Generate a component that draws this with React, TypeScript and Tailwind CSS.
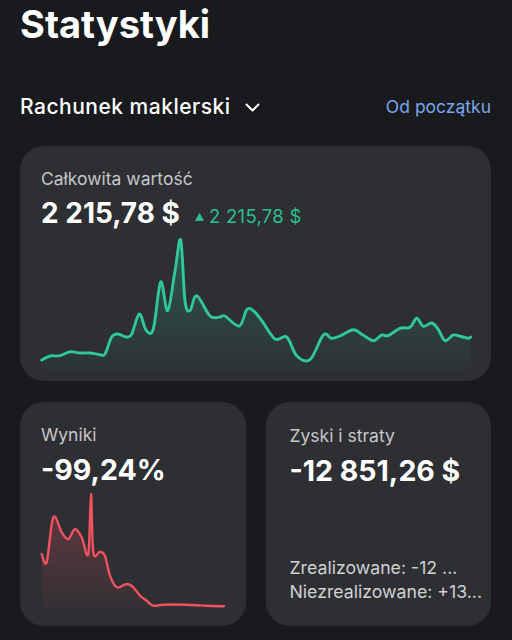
import React from "react";

type P = [number, number];

function smooth(pts: P[]): string {
  let d = `M${pts[0][0].toFixed(1)},${pts[0][1].toFixed(1)}`;
  for (let i = 0; i < pts.length - 1; i++) {
    const p0 = pts[i - 1] || pts[i];
    const p1 = pts[i];
    const p2 = pts[i + 1];
    const p3 = pts[i + 2] || p2;
    const c1x = p1[0] + (p2[0] - p0[0]) / 6;
    const c1y = p1[1] + (p2[1] - p0[1]) / 6;
    const c2x = p2[0] - (p3[0] - p1[0]) / 6;
    const c2y = p2[1] - (p3[1] - p1[1]) / 6;
    d += ` C${c1x.toFixed(1)},${c1y.toFixed(1)} ${c2x.toFixed(1)},${c2y.toFixed(1)} ${p2[0].toFixed(1)},${p2[1].toFixed(1)}`;
  }
  return d;
}

const green: P[] = [
  [41.7, 361], [50, 357], [60, 356.7], [70, 352.7], [80, 354], [90, 354], [100, 355.7], [105, 355],
  [111.7, 338], [118, 335], [126, 338], [131.7, 335], [139.3, 315], [146, 331], [153.3, 330],
  [160.7, 283], [167.7, 311.7], [175, 272], [180.7, 241], [185, 301.7], [190, 311.7], [196.7, 296.7],
  [210, 317], [220, 318], [225, 317], [239.3, 327], [246.7, 310.7], [253.3, 311.7], [262, 322],
  [275, 340], [286.7, 338], [296.7, 356.7], [310, 360.7], [323.3, 336], [331.7, 339.3], [340, 337],
  [353.3, 330.7], [363, 336], [373.3, 341.7], [381.7, 336], [388, 336.7], [400, 329.3], [410, 328.3],
  [416.7, 319.3], [423.3, 327.3], [431.7, 324], [438, 330], [445, 341.7], [453.3, 336], [461, 337.5],
  [468.3, 339.3], [470.7, 338],
];

const red: P[] = [
  [41.7, 555], [46.7, 563.3], [53.3, 518.3], [61.7, 533.3], [68.3, 540], [75, 530], [81.7, 538.3],
  [88.3, 555], [91, 495], [93.3, 553.3], [100, 552.7], [105, 557], [110, 576.7], [116.7, 588.3],
  [126.7, 585], [133.3, 588.3], [140, 596.7], [146.7, 601.7], [153.3, 606.7], [163.3, 605.7],
  [186.7, 605.7], [206.7, 606.7], [224, 607.3],
];

function area(pts: P[], bottom: number) {
  const last = pts[pts.length - 1];
  return `${smooth(pts)} L${last[0]},${bottom} L${pts[0][0]},${bottom} Z`;
}

export default function App() {
  return (
    <div
      className="w-[512px] h-[640px] overflow-hidden bg-[#181a1d] text-white"
      style={{ fontFamily: "Inter, 'Noto Sans', sans-serif" }}
    >
      <div className="pl-[20px] pt-[1px] text-[38px] leading-[46px] font-bold">Statystyki</div>

      <div className="flex items-center justify-between pl-[20px] pr-[21px] mt-[48px] h-[24px]">
        <div className="flex items-center gap-[14px]">
          <span className="text-[21px] font-medium leading-[24px] tracking-[0.5px]">Rachunek maklerski</span>
          <svg width="15" height="9" viewBox="0 0 15 9" fill="none">
            <path d="M1.5 1.5 L7.5 7.5 L13.5 1.5" stroke="white" strokeWidth="2" strokeLinecap="round" strokeLinejoin="round" />
          </svg>
        </div>
        <span className="text-[17.5px] leading-[24px] text-[#7ba6ea]">Od początku</span>
      </div>

      <div className="pl-[20px] pr-[21px] mt-[27px]">
        <div className="rounded-[24px] bg-[#2d2f33] overflow-hidden h-[235px] flex flex-col">
          <div className="pl-[21px] pt-[21px] h-[85px] shrink-0">
            <div className="text-[17.5px] leading-[24px] text-[#c6c7c9]">Całkowita wartość</div>
            <div className="flex items-baseline mt-[6px]">
              <span className="text-[28px] leading-[32px] font-bold">2 215,78 $</span>
              <span className="ml-[15px] flex items-baseline text-[18.5px] leading-[24px] text-[#2dbf93] tracking-[0.3px]">
                <svg width="9" height="8" viewBox="0 0 9 8" className="mr-[5px] self-center mt-[2px]">
                  <path d="M4.5 0.5 L8.5 7.5 L0.5 7.5 Z" fill="#2dbf93" stroke="#2dbf93" strokeWidth="0.8" strokeLinejoin="round" />
                </svg>
                2 215,78 $
              </span>
            </div>
          </div>
          <svg width="471" height="150" viewBox="20 232 471 150" className="block shrink-0">
            <defs>
              <linearGradient id="gfill" x1="0" y1="240" x2="0" y2="372" gradientUnits="userSpaceOnUse">
                <stop offset="0" stopColor="#2fc59a" stopOpacity="0.28" />
                <stop offset="1" stopColor="#2fc59a" stopOpacity="0.02" />
              </linearGradient>
            </defs>
            <path d={area(green, 372)} fill="url(#gfill)" />
            <path d={smooth(green)} fill="none" stroke="#2fc79b" strokeWidth="2.9" strokeLinecap="round" strokeLinejoin="round" />
          </svg>
        </div>

        <div className="grid grid-cols-2 gap-[20px] mt-[21px]">
          <div className="rounded-[24px] bg-[#2d2f33] overflow-hidden h-[224px] flex flex-col">
            <div className="pl-[21px] pt-[21px] h-[85px] shrink-0">
              <div className="text-[17.5px] leading-[24px] text-[#c6c7c9]">Wyniki</div>
              <div className="mt-[7px] text-[28.5px] leading-[32px] font-bold">-99,24%</div>
            </div>
            <svg width="226" height="139" viewBox="20 488 226 139" className="block shrink-0">
              <defs>
                <linearGradient id="rfill" x1="0" y1="495" x2="0" y2="610" gradientUnits="userSpaceOnUse">
                  <stop offset="0" stopColor="#f0505f" stopOpacity="0.3" />
                  <stop offset="1" stopColor="#f0505f" stopOpacity="0.03" />
                </linearGradient>
              </defs>
              <path d={area(red, 609)} fill="url(#rfill)" />
              <path d={smooth(red)} fill="none" stroke="#f2515f" strokeWidth="2.4" strokeLinecap="round" strokeLinejoin="round" />
            </svg>
          </div>

          <div className="rounded-[24px] bg-[#2d2f33] h-[224px] flex flex-col pl-[24px] pt-[22px] pb-[22px]">
            <div className="text-[17.5px] leading-[24px] text-[#c6c7c9]">Zyski i straty</div>
            <div className="mt-[7px] text-[28.5px] leading-[32px] font-bold whitespace-nowrap">-12 851,26 $</div>
            <div className="mt-auto text-[17.7px] leading-[24px] text-[#d0d1d3] whitespace-nowrap">
              <div>Zrealizowane: -12 ...</div>
              <div>Niezrealizowane: +13...</div>
            </div>
          </div>
        </div>
      </div>
    </div>
  );
}
